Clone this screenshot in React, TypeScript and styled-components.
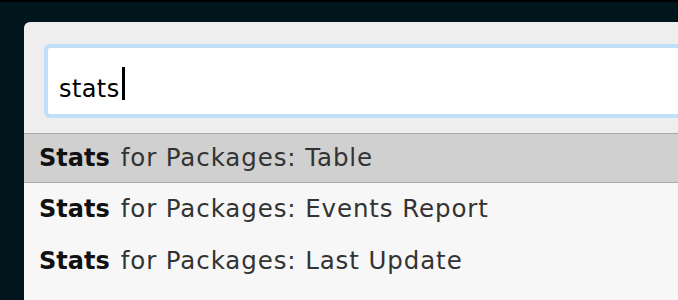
import React from "react";
import styled, { createGlobalStyle } from "styled-components";

const GlobalStyle = createGlobalStyle`
  html, body {
    margin: 0;
    padding: 0;
    background: #01161c;
    overflow: hidden;
  }
  * {
    box-sizing: border-box;
  }
`;

interface Command {
  match: string;
  rest: string;
}

const commands: Command[] = [
  { match: "Stats", rest: "for Packages: Table" },
  { match: "Stats", rest: "for Packages: Events Report" },
  { match: "Stats", rest: "for Packages: Last Update" },
];

const App = () => {
  const query = "stats";
  const selectedIdx = 0;

  return (
    <>
      <GlobalStyle />
      <Screen>
        <Palette>
          <SearchArea>
            <SearchField>
              <QueryText>{query}</QueryText>
              <Caret />
            </SearchField>
          </SearchArea>
          <ResultList>
            {commands.map((cmd, idx) => (
              <ResultRow key={cmd.rest} selected={idx === selectedIdx}>
                <Match>{cmd.match}</Match>
                <Rest>{cmd.rest}</Rest>
              </ResultRow>
            ))}
          </ResultList>
        </Palette>
      </Screen>
    </>
  );
};

export default App;

const Screen = styled.div`
  height: 300px;
  border-top: 2px solid #000;
  padding: 20px 0 0 24px;
  display: flex;
  flex-direction: column;
`;

const Palette = styled.div`
  flex: 1;
  display: flex;
  flex-direction: column;
  background-color: #eeeeee;
  border-top-left-radius: 6px;
  overflow: hidden;
  font-family: "DejaVu Sans", "Liberation Sans", sans-serif;
`;

const SearchArea = styled.div`
  padding: 22px 0 15px 20px;
  flex-shrink: 0;
`;

const SearchField = styled.div`
  height: 74px;
  margin-right: -20px;
  padding: 19px 0 0 11px;
  background-color: #fff;
  border: 4px solid #c2dffa;
  border-radius: 6px;
  font-size: 24px;
  line-height: 28px;
  color: #000;
  white-space: nowrap;
`;

const QueryText = styled.span`
  letter-spacing: 0.4px;
`;

const Caret = styled.span`
  display: inline-block;
  width: 3px;
  height: 33px;
  margin-left: 2px;
  vertical-align: -3px;
  background-color: #000;
`;

const ResultList = styled.ul`
  flex: 1;
  margin: 0;
  padding: 0;
  list-style: none;
  background-color: #f7f7f7;
`;

const ResultRow = styled.li<{ selected: boolean }>`
  height: ${props => (props.selected ? "50px" : "52px")};
  line-height: ${props => (props.selected ? "48px" : "52px")};
  padding-left: 15px;
  font-size: 24px;
  white-space: nowrap;
  background-color: ${props => (props.selected ? "#d0d0d0" : "transparent")};
  border-top: ${props => (props.selected ? "1px solid #a9a9a9" : "none")};
  border-bottom: ${props => (props.selected ? "1px solid #a9a9a9" : "none")};
`;

const Match = styled.b`
  font-weight: 700;
  color: #111;
  margin-right: 11px;
`;

const Rest = styled.span`
  font-size: 24.5px;
  letter-spacing: 0.9px;
  color: #333;
`;
